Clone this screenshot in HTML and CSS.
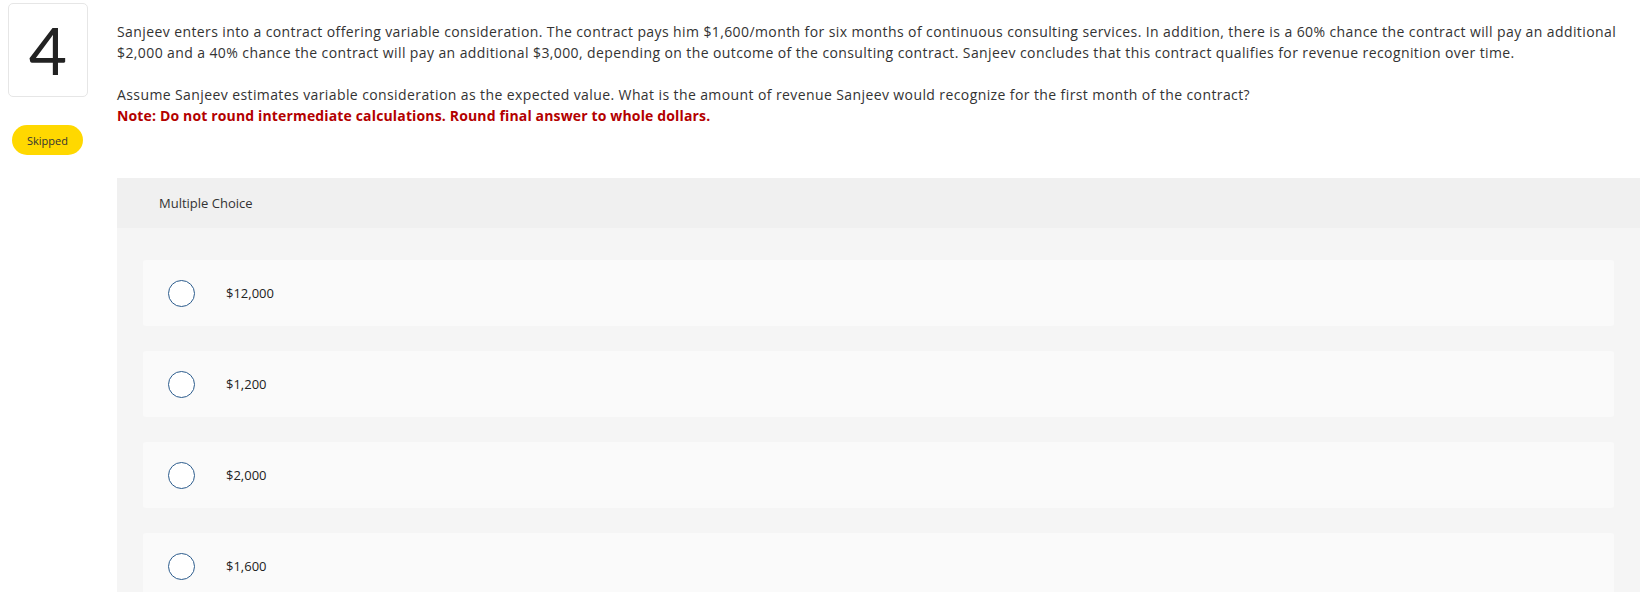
FILE: index.html
```html
<!DOCTYPE html>
<html lang="en">
<head>
<meta charset="utf-8">
<title>Question 4</title>
<link rel="stylesheet" href="styles.css">
</head>
<body>
<div class="page">
  <aside class="side">
    <div class="qnum">4</div>
    <div class="badge">Skipped</div>
  </aside>
  <main class="main">
    <div class="prompt">
      <p class="para">Sanjeev enters into a contract offering variable consideration. The contract pays him $1,600/month for six months of continuous consulting services. In addition, there is a 60% chance the contract will pay an additional<br>$2,000 and a 40% chance the contract will pay an additional $3,000, depending on the outcome of the consulting contract. Sanjeev concludes that this contract qualifies for revenue recognition over time.</p>
      <p class="para">Assume Sanjeev estimates variable consideration as the expected value. What is the amount of revenue Sanjeev would recognize for the first month of the contract?<br><strong class="note">Note: Do not round intermediate calculations. Round final answer to whole dollars.</strong></p>
    </div>
    <section class="choices">
      <div class="choices-head">Multiple Choice</div>
      <div class="choices-body">
        <label class="option"><span class="radio"></span><span class="opt-text">$12,000</span></label>
        <label class="option"><span class="radio"></span><span class="opt-text">$1,200</span></label>
        <label class="option"><span class="radio"></span><span class="opt-text">$2,000</span></label>
        <label class="option"><span class="radio"></span><span class="opt-text">$1,600</span></label>
      </div>
    </section>
  </main>
</div>
</body>
</html>
```

FILE: styles.css
```css
html, body {
  margin: 0;
  padding: 0;
  background: #ffffff;
}
body {
  font-family: "Open Sans", Lato, sans-serif;
  color: #333333;
  overflow: hidden;
}
.page {
  display: flex;
  align-items: flex-start;
  width: 1640px;
}
.side {
  width: 117px;
  flex: none;
  display: flex;
  flex-direction: column;
  align-items: flex-start;
}
.qnum {
  margin: 3px 0 0 8px;
  width: 78px;
  height: 92px;
  border: 1px solid #e6e6e6;
  border-radius: 5px;
  display: flex;
  align-items: center;
  justify-content: center;
  font-family: Lato, "Open Sans", sans-serif;
  font-size: 66px;
  font-weight: 400;
  color: #222222;
  line-height: 1;
}
.badge {
  margin: 28px 0 0 12px;
  width: 71px;
  height: 30px;
  border-radius: 15px;
  background: #ffd800;
  color: #333333;
  font-size: 11px;
  display: flex;
  align-items: center;
  justify-content: center;
}
.main {
  flex: 1;
  min-width: 0;
}
.prompt {
  padding-top: 21px;
  font-size: 14px;
  line-height: 21px;
  letter-spacing: 0.4px;
  white-space: nowrap;
}
.para {
  margin: 0 0 21px 0;
}
.para:last-child {
  margin-bottom: 0;
}
.note {
  color: #b30000;
  font-weight: 700;
  letter-spacing: 0.15px;
}
.choices {
  margin-top: 52px;
  background: #f5f5f5;
}
.choices-head {
  height: 50px;
  background: #f0f0f0;
  display: flex;
  align-items: center;
  padding-left: 42px;
  font-size: 13px;
  color: #333333;
}
.choices-body {
  padding: 32px 26px 40px 26px;
  display: flex;
  flex-direction: column;
  gap: 25px;
}
.option {
  height: 66px;
  background: #fafafa;
  border-radius: 3px;
  display: flex;
  align-items: center;
  padding-left: 25px;
}
.radio {
  width: 25px;
  height: 25px;
  border: 1.6px solid #2b5b8c;
  border-radius: 50%;
  background: #ffffff;
  flex: none;
}
.opt-text {
  margin-left: 31px;
  font-size: 13px;
  color: #222222;
}
```
